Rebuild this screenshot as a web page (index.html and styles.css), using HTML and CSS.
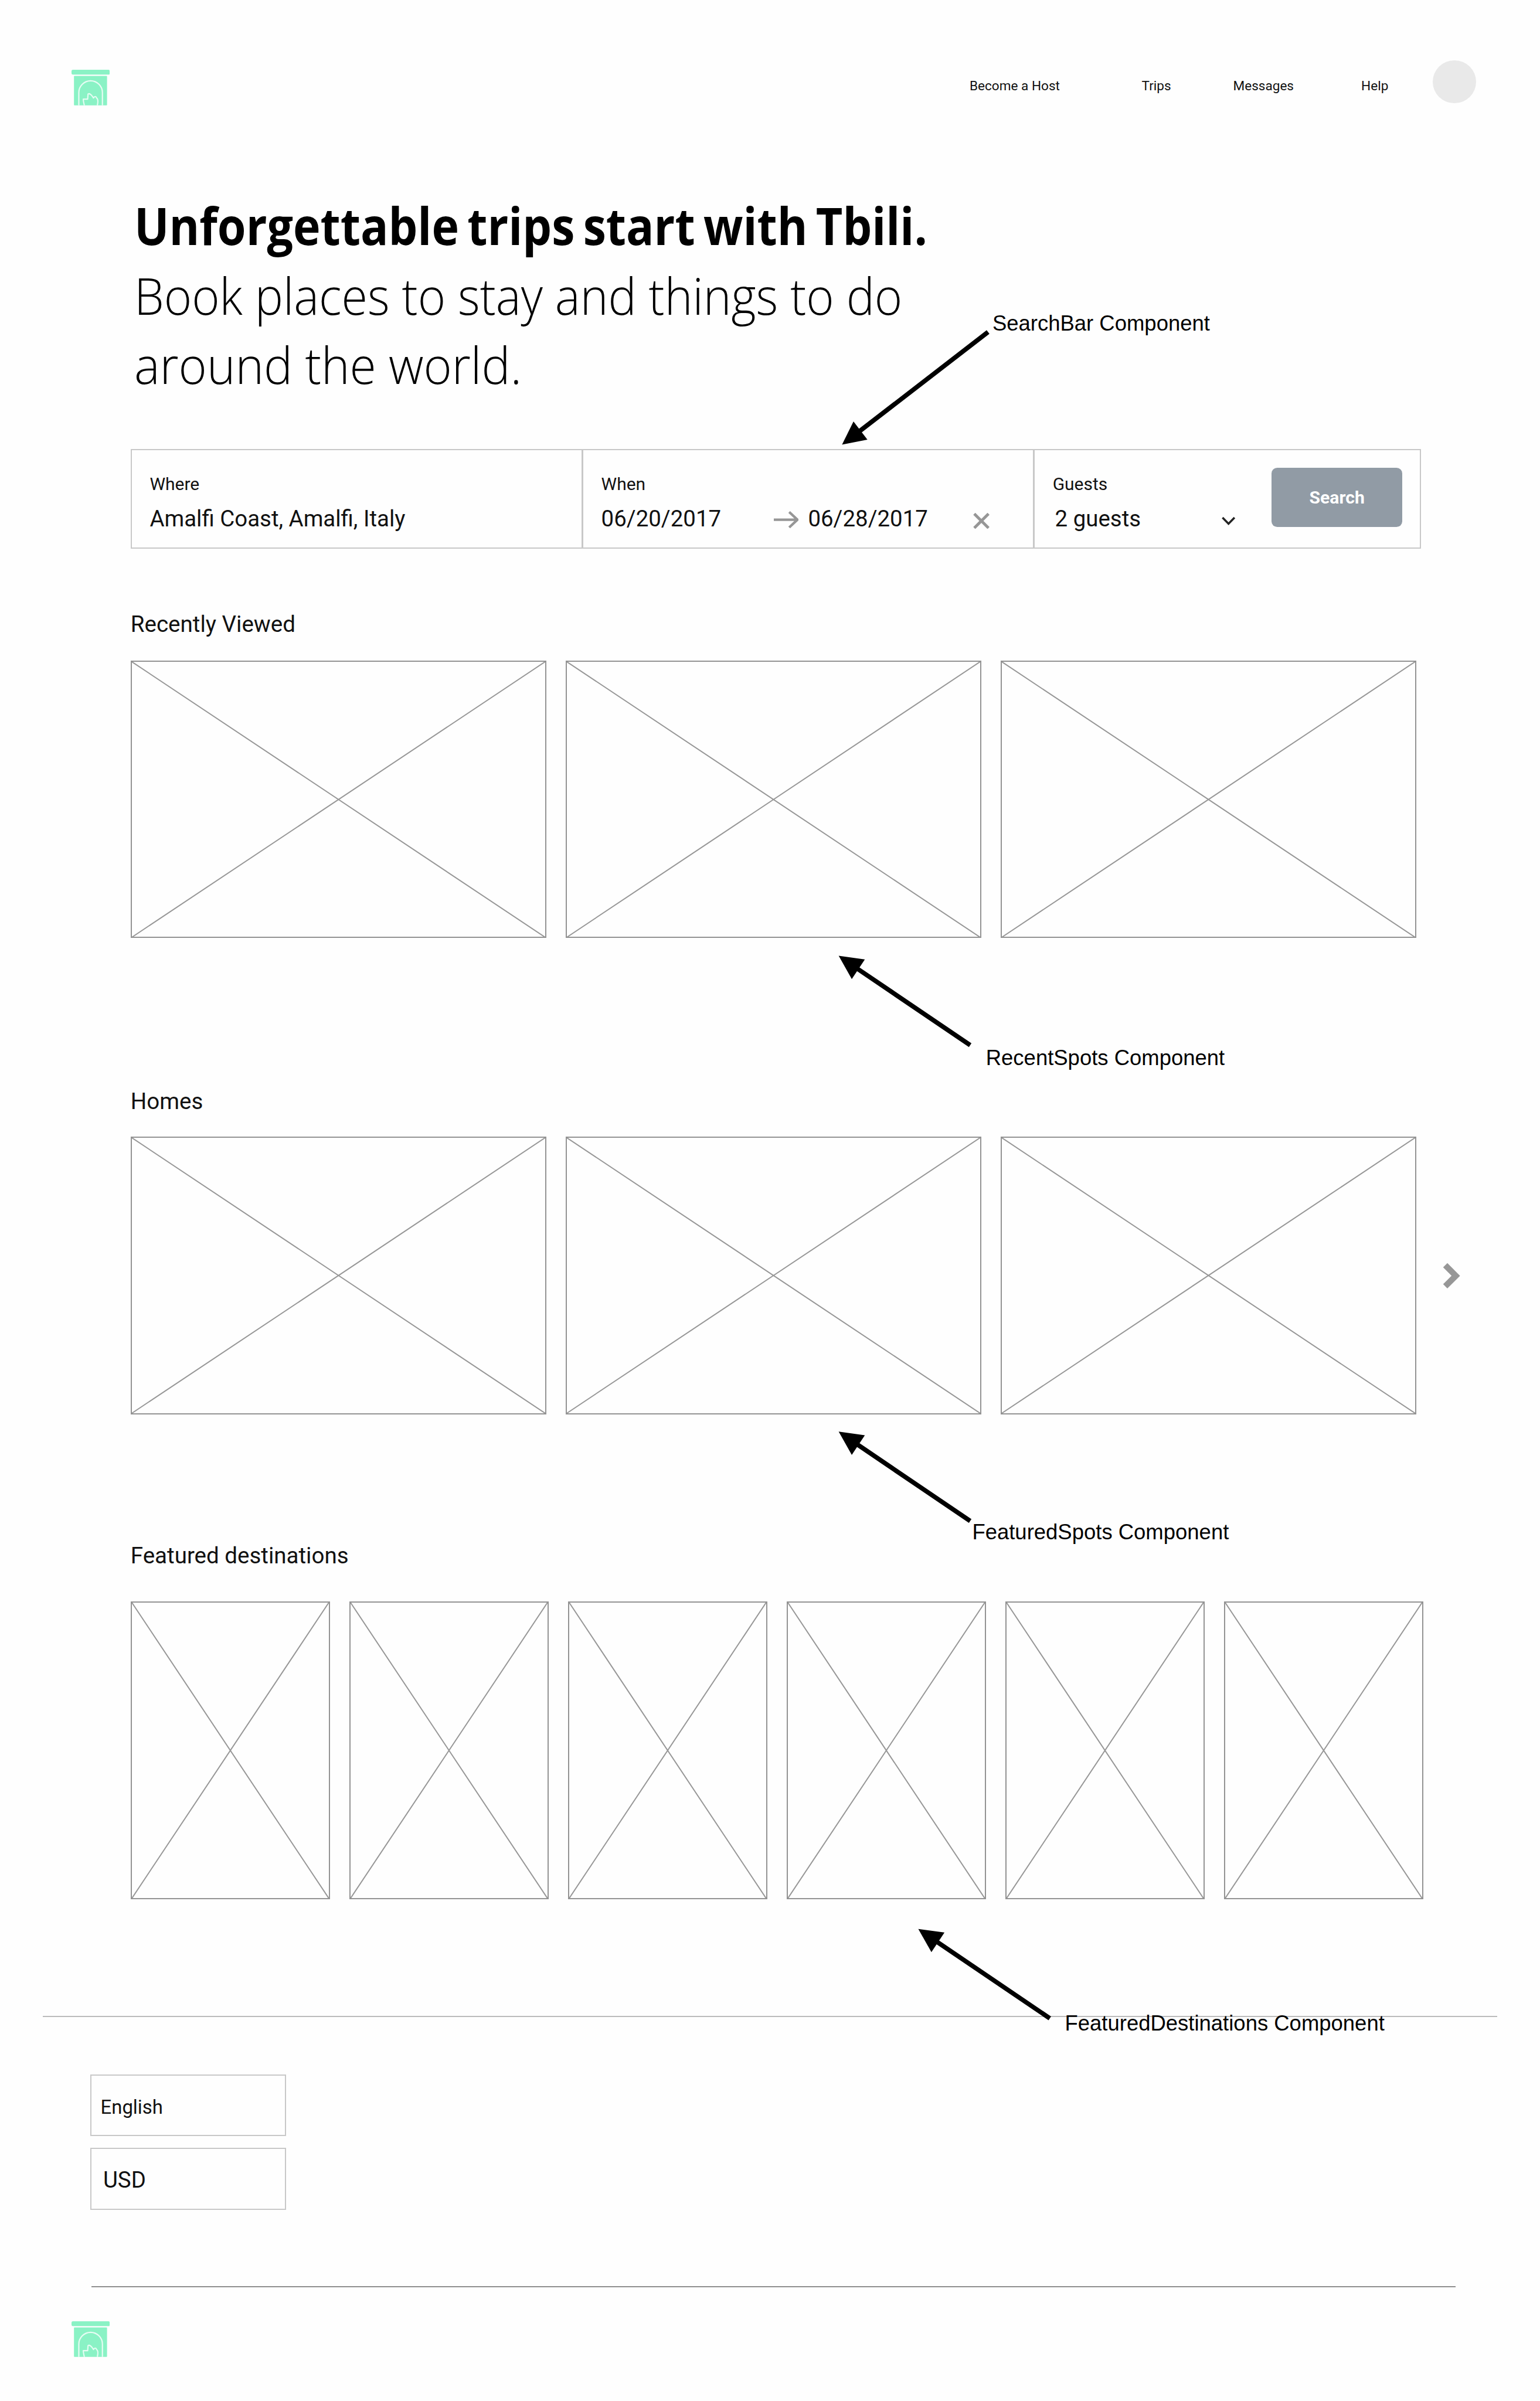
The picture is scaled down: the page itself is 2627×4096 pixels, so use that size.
FILE: index.html
```html
<!DOCTYPE html>
<html lang="en">
<head>
<meta charset="utf-8">
<title>Tbili</title>
<link rel="stylesheet" href="styles.css">
</head>
<body>
<svg class="defs" aria-hidden="true">
  <symbol id="logo" viewBox="0 0 67 63">
    <rect x="0" y="0" width="67" height="8.6" rx="2.4" fill="#8af2c5"/>
    <rect x="4.3" y="10.8" width="58" height="51.7" rx="1" fill="#8af2c5"/>
    <path d="M12.8 62.5V40a20.7 20.7 0 0 1 41.4 0V62.5" fill="none" stroke="#e6fcf3" stroke-width="2.3"/>
    <path d="M22.5 62.5C21.5 58 20.5 55 20.6 51.5H28.3L29 42.5C32 41 34 43.5 36.5 46.5L38.5 49.5C40.5 46 43 46.5 44 49.5C47 51.500 46.500 57 45.300 62.500" fill="none" stroke="#e6fcf3" stroke-width="2.200" stroke-linejoin="round"/>
  </symbol>
</svg>

<header class="header">
  <svg class="logo"><use href="#logo"/></svg>
  <nav class="nav">
    <a>Become a Host</a>
    <a>Trips</a>
    <a>Messages</a>
    <a>Help</a>
    <span class="avatar"></span>
  </nav>
</header>

<main class="main">
  <h1 class="hero">
    <span class="hero-strong">Unforgettable trips start with Tbili.</span>
    <span class="hero-light">Book places to stay and things to do</span>
    <span class="hero-light hero-last">around the world.</span>
  </h1>

  <form class="search">
    <div class="field">
      <label>Where</label>
      <div class="value">Amalfi Coast, Amalfi, Italy</div>
    </div>
    <div class="field">
      <label>When</label>
      <div class="value dates">
        <span>06/20/2017</span>
        <svg class="arrow" viewBox="0 0 44 30"><path d="M0 15H41M27 1.500L41.500 15L27 28.500" fill="none" stroke="#969696" stroke-width="4.400"/></svg>
        <span>06/28/2017</span>
        <svg class="clear" viewBox="0 0 29 28"><path d="M2 1.500L27 26.500M27 1.500L2 26.500" fill="none" stroke="#969696" stroke-width="5"/></svg>
      </div>
    </div>
    <div class="field guests">
      <div>
        <label>Guests</label>
        <div class="value count">
          <span>2 guests</span>
          <svg class="chevron" viewBox="0 0 24 16"><path d="M1.500 2L12 12.800L22.500 2" fill="none" stroke="#222" stroke-width="3.600"/></svg>
        </div>
      </div>
      <button type="button" class="button">Search</button>
    </div>
  </form>

  <section class="section recent">
    <h2>Recently Viewed</h2>
    <div class="row wide">
      <svg class="box" viewBox="0 0 100 100" preserveAspectRatio="none"><path d="M0 0L100 100M100 0L0 100"/></svg>
      <svg class="box" viewBox="0 0 100 100" preserveAspectRatio="none"><path d="M0 0L100 100M100 0L0 100"/></svg>
      <svg class="box" viewBox="0 0 100 100" preserveAspectRatio="none"><path d="M0 0L100 100M100 0L0 100"/></svg>
    </div>
  </section>

  <section class="section homes">
    <h2>Homes</h2>
    <div class="row wide">
      <svg class="box" viewBox="0 0 100 100" preserveAspectRatio="none"><path d="M0 0L100 100M100 0L0 100"/></svg>
      <svg class="box" viewBox="0 0 100 100" preserveAspectRatio="none"><path d="M0 0L100 100M100 0L0 100"/></svg>
      <svg class="box" viewBox="0 0 100 100" preserveAspectRatio="none"><path d="M0 0L100 100M100 0L0 100"/></svg>
      <svg class="next" viewBox="0 0 31 46"><path d="M4.500 4.500L23 23L4.500 41.500" fill="none" stroke="#979797" stroke-width="10.500"/></svg>
    </div>
  </section>

  <section class="section destinations">
    <h2>Featured destinations</h2>
    <div class="row tall">
      <svg class="box" viewBox="0 0 100 100" preserveAspectRatio="none"><path d="M0 0L100 100M100 0L0 100"/></svg>
      <svg class="box" viewBox="0 0 100 100" preserveAspectRatio="none"><path d="M0 0L100 100M100 0L0 100"/></svg>
      <svg class="box" viewBox="0 0 100 100" preserveAspectRatio="none"><path d="M0 0L100 100M100 0L0 100"/></svg>
      <svg class="box" viewBox="0 0 100 100" preserveAspectRatio="none"><path d="M0 0L100 100M100 0L0 100"/></svg>
      <svg class="box" viewBox="0 0 100 100" preserveAspectRatio="none"><path d="M0 0L100 100M100 0L0 100"/></svg>
      <svg class="box" viewBox="0 0 100 100" preserveAspectRatio="none"><path d="M0 0L100 100M100 0L0 100"/></svg>
    </div>
  </section>
</main>

<footer class="footer">
  <div class="select language">English</div>
  <div class="select currency">USD</div>
  <hr class="rule">
  <svg class="logo"><use href="#logo"/></svg>
</footer>

<svg class="notes" viewBox="0 0 2700 4210">
  <g stroke="#000" stroke-width="8">
    <path d="M1732.300 582.200L1500 761.500"/>
    <path d="M1701 1832.700L1498 1695"/>
    <path d="M1701 2667L1498 2529.300"/>
    <path d="M1840.600 3539L1637.600 3401.300"/>
  </g>
  <path d="M1476.300 779.700L1496.400 739L1520.800 771Z"/>
  <path d="M1470.400 1676L1516.300 1682.300L1493.400 1716.700Z"/>
  <path d="M1470.400 2510.300L1516.300 2516.600L1493.400 2551Z"/>
  <path d="M1610 3382.300L1655.900 3388.600L1633 3423Z"/>
  <text x="1740" y="579.300">SearchBar Component</text>
  <text x="1728.500" y="1867.700">RecentSpots Component</text>
  <text x="1704.500" y="2699">FeaturedSpots Component</text>
  <text x="1867" y="3560">FeaturedDestinations Component</text>
</svg>
</body>
</html>
```
FILE: styles.css
```css
/* 1rem is one hundred units of the 2700-unit wide design */
html { font-size: 97.296px; background: #fefefe; }
* { box-sizing: border-box; }
body {
  position: relative;
  margin: 0;
  width: 2627px;
  height: 4096px;
  overflow: hidden;
  color: #111;
  font-family: Roboto, "Liberation Sans", sans-serif;
}
svg { display: block; flex: none; }
.defs { position: absolute; width: 0; height: 0; }

.header {
  display: flex;
  align-items: flex-start;
  height: 3.34rem;
  padding: 1.057rem 0 0 1.25rem;
}
.logo { width: .67rem; height: .63rem; }
.header .logo { margin-top: .168rem; }
.nav {
  display: grid;
  grid-template-columns: 3.017rem 1.603rem 2.247rem 1.255rem .755rem;
  margin-left: 15.08rem;
  height: .755rem;
  font-size: .232rem;
}
.nav a { margin-top: .296rem; line-height: .3rem; white-space: nowrap; }
.avatar { width: .755rem; height: .755rem; border-radius: 50%; background: #e9e9e9; }

.main { padding-left: 2.29rem; }
.hero {
  margin: 0;
  padding-left: .065rem;
  font: 300 .9rem/1.22rem "Open Sans", "Noto Sans", sans-serif;
  color: #000;
}
.hero span { display: block; width: max-content; white-space: nowrap; transform-origin: 0 0; }
.hero-strong { font-weight: 700; word-spacing: -.07rem; transform: scaleX(.9); }
.hero-light { transform: scaleX(.924); }
.hero .hero-last { transform: scaleX(.94); }

.search {
  display: grid;
  grid-template-columns: 7.885rem 7.915rem 6.785rem;
  width: 22.625rem;
  height: 1.744rem;
  margin-top: .873rem;
  border: 2px solid #c8c8c8;
}
.field { padding: .4rem 0 0 .315rem; }
.field + .field { border-left: 3px solid #c8c8c8; }
.field label { display: block; font-size: .308rem; line-height: .4rem; }
.value { display: flex; align-items: center; font-size: .395rem; line-height: .6rem; margin-top: .104rem; height: .6rem; white-space: nowrap; }
.arrow { width: .44rem; height: .3rem; margin: .034rem .165rem 0 .92rem; }
.clear { width: .29rem; height: .28rem; margin: .068rem 0 0 .79rem; }
.chevron { width: .24rem; height: .16rem; margin: .068rem 0 0 1.42rem; }
.count { padding-left: .04rem; }
.guests { display: flex; }
.button {
  width: 2.288rem;
  height: 1.04rem;
  margin: -.09rem 0 0 .635rem;
  padding: 0;
  border: 0;
  border-radius: .1rem;
  background: #919ba5;
  color: #fff;
  font: 700 .31rem/1rem Roboto, sans-serif;
}

.section h2 { margin: 0; font-weight: 400; font-size: .396rem; line-height: .6rem; }
.row { display: flex; gap: .342rem; align-items: center; }
.box { border: 2px solid #939393; }
.box path { fill: none; stroke: #979797; stroke-width: 2; vector-effect: non-scaling-stroke; }
.wide .box { width: 7.285rem; height: 4.87rem; }
.tall .box { width: 3.493rem; height: 5.225rem; }
.tall { gap: .341rem; }
.recent { margin-top: 1.03rem; }
.recent .row { margin-top: .333rem; }
.homes { margin-top: 2.565rem; }
.homes .row { margin-top: .315rem; }
.destinations { margin-top: 2.178rem; }
.destinations .row { margin-top: .502rem; }
.next { width: .31rem; height: .46rem; margin-left: .12rem; }

.footer {
  margin: 2.045rem .75rem 0;
  padding: 1rem 0 0 .5rem;
  border-top: 2px solid #bbb;
}
.select {
  width: 3.437rem;
  height: 1.085rem;
  margin-left: .333rem;
  border: 2px solid #c8c8c8;
  line-height: 1.085rem;
}
.language { padding: .04rem 0 0 .16rem; line-height: 1.045rem; font-size: .338rem; }
.currency { margin-top: .205rem; padding: 0 0 0 .205rem; font-size: .395rem; }
.rule { width: 23.92rem; height: 2px; margin: 1.335rem 0 0 .352rem; border: 0; background: #8f8f8f; }
.footer .logo { margin-top: .605rem; }

.notes { position: absolute; left: 0; top: 0; width: 2627px; height: 4096px; }
.notes text { font: 37.5px "Liberation Sans", Arial, sans-serif; fill: #000; }
```
